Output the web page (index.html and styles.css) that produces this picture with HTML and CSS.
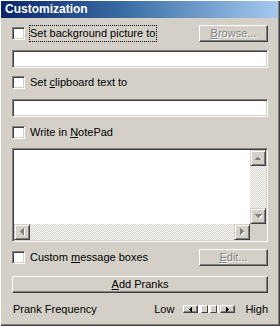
FILE: index.html
```html
<!DOCTYPE html>
<html>
<head>
<meta charset="utf-8">
<link rel="stylesheet" href="styles.css">
</head>
<body>
<div class="window">
  <div class="title">Customization</div>
  <div class="content">
    <div class="row r1">
      <span class="check"></span>
      <span class="label focus">Set background picture to</span>
      <span class="btn small disabled"><u>B</u>rowse...</span>
    </div>
    <div class="field sunken"></div>
    <div class="row r2">
      <span class="check"></span>
      <span class="label">Set <u>c</u>lipboard text to</span>
    </div>
    <div class="field sunken"></div>
    <div class="row r3">
      <span class="check"></span>
      <span class="label">Write in <u>N</u>otePad</span>
    </div>
    <div class="memo sunken">
      <div class="memo-grid">
        <div class="memo-text"></div>
        <div class="vscroll">
          <span class="sbtn"><svg width="7" height="5" viewBox="0 0 7 5"><path class="hi" d="M4 1h1v1h1v1h1v1H1V3h1V2h1V1z"/><path class="ar" d="M3 0h1v1h1v1h1v1H0V2h1V1h1V0z" transform="translate(0,1)"/></svg></span>
          <span class="track"></span>
          <span class="sbtn"><svg width="7" height="5" viewBox="0 0 7 5"><path class="hi" d="M1 1h7v1H7v1H6v1H5v1H4V4H3V3H2V2H1z"/><path class="ar" d="M0 0h7v1H6v1H5v1H4v1H3V3H2V2H1V1H0z"/></svg></span>
        </div>
        <div class="hscroll">
          <span class="sbtn"><svg width="5" height="8" viewBox="0 0 5 8"><path class="hi" d="M4 1h1v7H4V7H3V6H2V5H1V4h1V3h1V2h1z"/><path class="ar" d="M3 0h1v7H3V6H2V5H1V4H0V3h1V2h1V1h1z"/></svg></span>
          <span class="track"></span>
          <span class="sbtn"><svg width="5" height="8" viewBox="0 0 5 8"><path class="hi" d="M1 1h1v1h1v1h1v1h1v1H4v1H3v1H2v1H1z"/><path class="ar" d="M0 0h1v1h1v1h1v1h1v1H3v1H2v1H1v1H0z"/></svg></span>
        </div>
        <div class="corner"></div>
      </div>
    </div>
    <div class="row r4">
      <span class="check"></span>
      <span class="label">Custom <u>m</u>essage boxes</span>
      <span class="btn small disabled"><u>E</u>dit...</span>
    </div>
    <div class="btn wide"><span><u>A</u>dd Pranks</span></div>
    <div class="row freq">
      <span class="label plain">Prank Frequency</span>
      <div class="slider-group">
        <span>Low</span>
        <div class="trackbar">
          <span class="tbtn"><svg width="3" height="5" viewBox="0 0 3 5"><path d="M2 0h1v5H2V4H1V3H0V2h1V1h1z"/></svg></span>
          <span class="ttrack"></span>
          <span class="thumb"></span>
          <span class="ttrack"></span>
          <span class="thumb"></span>
          <span class="ttrack"></span>
          <span class="tbtn"><svg width="3" height="5" viewBox="0 0 3 5"><path d="M0 0h1v1h1v1h1v1H2v1H1v1H0z"/></svg></span>
        </div>
        <span>High</span>
      </div>
    </div>
  </div>
</div>
</body>
</html>
```
FILE: styles.css
```css
html, body {
  margin: 0;
  padding: 0;
  background: #d4d0c8;
}

.window {
  width: 280px;
  height: 326px;
  box-sizing: border-box;
  padding: 1px 2px 2px 1px;
  background: #d4d0c8;
  box-shadow: inset 1px 1px #ffffff, inset -1px -1px #404040, inset -2px -2px #808080;
  display: flex;
  flex-direction: column;
  font: 11px "Liberation Sans", Arial, sans-serif;
  color: #000;
}

.title {
  height: 17px;
  line-height: 17px;
  padding-left: 4px;
  background: linear-gradient(90deg, #0a246a 0%, #3a6ea5 45%, #a6caf0 100%);
  color: #fff;
  font-weight: bold;
  font-size: 12px;
}

.content {
  display: flex;
  flex-direction: column;
  padding: 0 10px 0 11px;
}

.row {
  display: flex;
  align-items: center;
  height: 17px;
}

.r1 { margin-top: 7px; }
.r2 { margin-top: 6px; }
.r3 { margin-top: 7px; }
.r4 { margin-top: 7px; }

.check {
  width: 13px;
  height: 13px;
  box-sizing: border-box;
  flex: none;
  background: #fff;
  border: 1px solid;
  border-color: #808080 #ffffff #ffffff #808080;
  box-shadow: inset 1px 1px #404040, inset -1px -1px #d4d0c8;
}

.label {
  margin-left: 5px;
  line-height: 15px;
  white-space: nowrap;
}

.label.focus {
  margin-left: 4px;
  border: 1px dotted #000;
  padding: 0 1px 0 0;
}

.label.plain {
  margin-left: 1px;
}

.sunken {
  box-sizing: border-box;
  background: #fff;
  border: 1px solid;
  border-color: #808080 #ffffff #ffffff #808080;
  box-shadow: inset 1px 1px #404040, inset -1px -1px #d4d0c8;
}

.field {
  height: 18px;
  margin-top: 8px;
}

.memo {
  height: 94px;
  margin-top: 7px;
  padding: 1px;
}

.memo-grid {
  display: grid;
  grid-template-columns: 1fr 16px;
  grid-template-rows: 1fr 16px;
  height: 100%;
}

.vscroll {
  display: flex;
  flex-direction: column;
}

.hscroll {
  display: flex;
  flex-direction: row;
}

.track {
  flex: 1;
  background: repeating-conic-gradient(#d4d0c8 0 25%, #ffffff 0 50%) 0 0 / 2px 2px;
}

.corner {
  background: #d4d0c8;
}

.sbtn {
  width: 16px;
  height: 16px;
  flex: none;
  box-sizing: border-box;
  background: #d4d0c8;
  border: 1px solid;
  border-color: #d4d0c8 #404040 #404040 #d4d0c8;
  box-shadow: inset 1px 1px #ffffff, inset -1px -1px #808080;
  display: flex;
  align-items: center;
  justify-content: center;
}

.sbtn svg {
  display: block;
  shape-rendering: crispEdges;
}

.sbtn .hi { fill: #ffffff; }
.sbtn .ar { fill: #808080; }

.btn {
  box-sizing: border-box;
  height: 17px;
  background: #d4d0c8;
  border: 1px solid;
  border-color: #ffffff #404040 #404040 #ffffff;
  box-shadow: inset -1px -1px #808080;
  display: flex;
  align-items: center;
  justify-content: center;
  line-height: 13px;
}

.btn.small {
  width: 69px;
  margin-left: auto;
}

.btn.disabled {
  color: #808080;
  text-shadow: 1px 1px 0 #ffffff;
}

.btn.wide {
  margin-top: 10px;
}

.freq {
  margin-top: 7px;
  height: 18px;
}

.slider-group {
  margin-left: auto;
  display: flex;
  align-items: center;
  gap: 9px;
}

.slider-group span:last-child {
  margin-left: 1px;
}

.trackbar {
  display: flex;
  height: 8px;
  width: 52px;
}

.tbtn {
  width: 15px;
  height: 8px;
  box-sizing: border-box;
  flex: none;
  background: #d4d0c8;
  border: 1px solid;
  border-color: #ffffff #404040 #404040 #ffffff;
  box-shadow: inset -1px -1px #808080;
  display: flex;
  align-items: center;
  justify-content: center;
}

.tbtn svg {
  display: block;
  shape-rendering: crispEdges;
  fill: #000;
}

.ttrack {
  flex: 1;
  background: #ffffff;
}

.thumb {
  width: 7px;
  flex: none;
  box-sizing: border-box;
  background: #d4d0c8;
  border: 1px solid;
  border-color: #ffffff #404040 #404040 #ffffff;
}
```
